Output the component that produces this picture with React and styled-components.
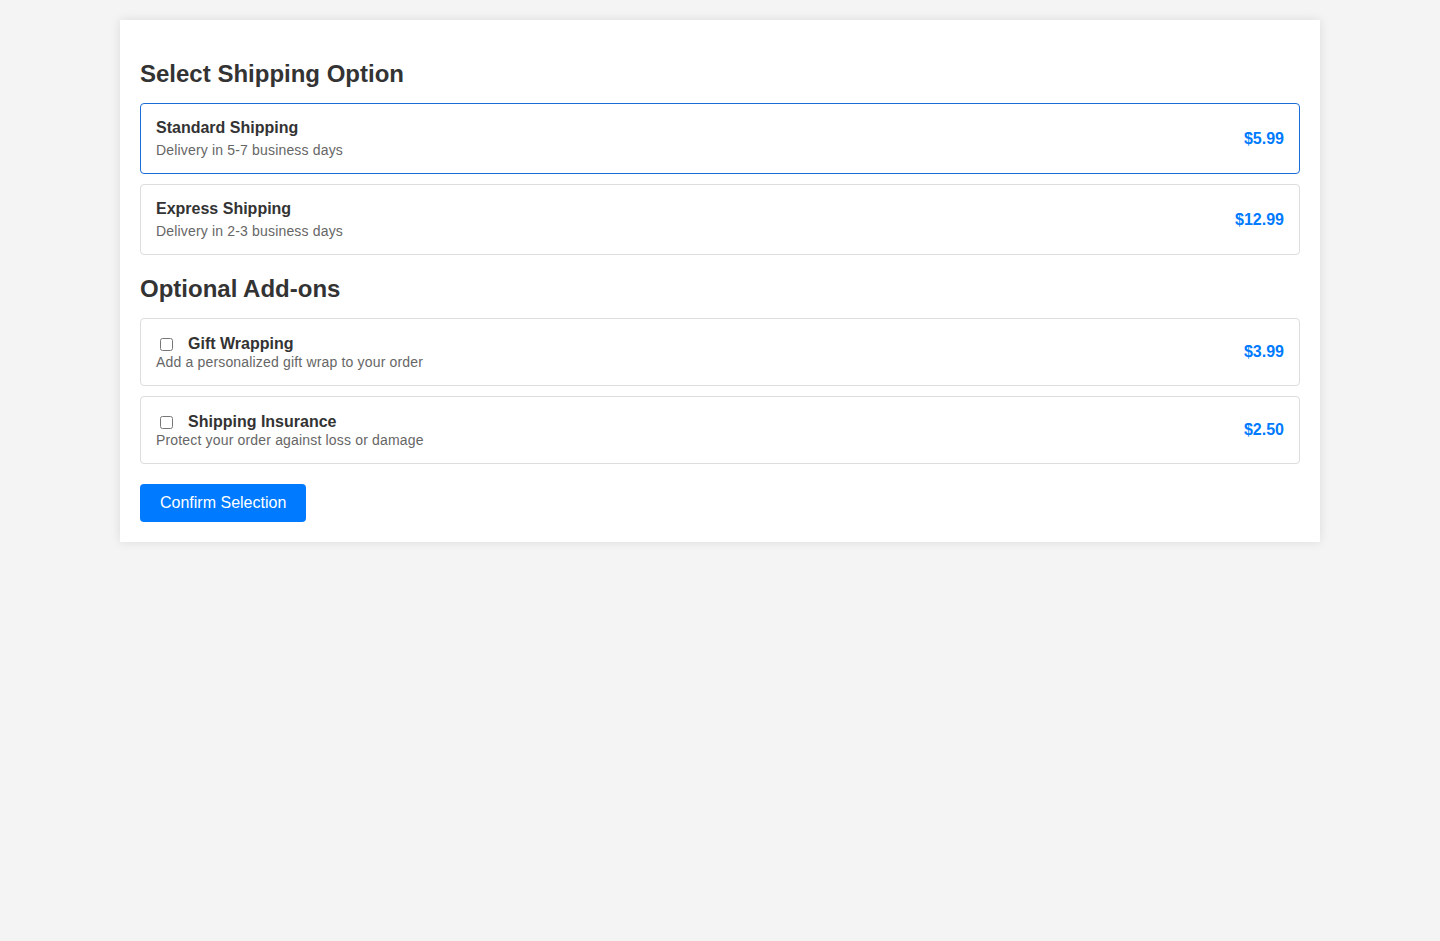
import React, { useState } from 'react';
import styled, { createGlobalStyle } from 'styled-components';

const GlobalStyle = createGlobalStyle`
  body {
    margin: 0;
    padding: 20px 0;
    background: #f4f4f4;
    font-family: "Liberation Sans", Arial, sans-serif;
    color: #333;
  }
`;

const Panel = styled.div`
  width: 1200px;
  margin: 0 auto;
  padding: 20px;
  box-sizing: border-box;
  background: #fff;
  box-shadow: 0 0 10px rgba(0, 0, 0, 0.1);
`;

const SectionTitle = styled.h2`
  font-size: 24px;
  line-height: 28px;
  margin: 20px 0 15px;
  color: #333;
`;

const OptionCard = styled.div`
  display: flex;
  align-items: center;
  justify-content: space-between;
  padding: 15px;
  margin-bottom: 10px;
  border: 1px solid ${(p) => (p.selected ? '#1a6fd6' : '#ddd')};
  border-radius: 4px;
  cursor: pointer;
`;

const OptionTitle = styled.div`
  font-size: 16px;
  line-height: 18px;
  font-weight: bold;
  color: #333;
  margin-bottom: ${(p) => (p.tight ? '0' : '5px')};
`;

const OptionDesc = styled.div`
  font-size: 14px;
  line-height: 16px;
  letter-spacing: 0.17px;
  color: #666;
`;

const Price = styled.div`
  font-size: 16px;
  font-weight: bold;
  color: #007bff;
`;

const AddonLabel = styled.label`
  display: flex;
  align-items: center;
  height: 20px;
  cursor: pointer;
`;

const Check = styled.input`
  width: 13px;
  height: 13px;
  margin: 0 15px 0 4px;
`;

const ConfirmButton = styled.button`
  margin-top: 10px;
  padding: 10px 20px;
  font-family: inherit;
  font-size: 16px;
  line-height: 18px;
  color: #fff;
  background: #007bff;
  border: none;
  border-radius: 4px;
  cursor: pointer;
`;

const shippingOptions = [
  { id: 'standard', title: 'Standard Shipping', desc: 'Delivery in 5-7 business days', price: '$5.99' },
  { id: 'express', title: 'Express Shipping', desc: 'Delivery in 2-3 business days', price: '$12.99' },
];

const addons = [
  { id: 'gift', title: 'Gift Wrapping', desc: 'Add a personalized gift wrap to your order', price: '$3.99' },
  { id: 'insurance', title: 'Shipping Insurance', desc: 'Protect your order against loss or damage', price: '$2.50' },
];

const App = () => {
  const [shipping, setShipping] = useState('standard');
  const [extras, setExtras] = useState({});

  return (
    <>
      <GlobalStyle />
      <Panel>
        <SectionTitle>Select Shipping Option</SectionTitle>
        {shippingOptions.map((opt) => (
          <OptionCard
            key={opt.id}
            selected={shipping === opt.id}
            onClick={() => setShipping(opt.id)}
          >
            <div>
              <OptionTitle>{opt.title}</OptionTitle>
              <OptionDesc>{opt.desc}</OptionDesc>
            </div>
            <Price>{opt.price}</Price>
          </OptionCard>
        ))}

        <SectionTitle>Optional Add-ons</SectionTitle>
        {addons.map((item) => (
          <OptionCard key={item.id}>
            <div>
              <AddonLabel>
                <Check
                  type="checkbox"
                  checked={!!extras[item.id]}
                  onChange={() => setExtras({ ...extras, [item.id]: !extras[item.id] })}
                />
                <OptionTitle tight>{item.title}</OptionTitle>
              </AddonLabel>
              <OptionDesc>{item.desc}</OptionDesc>
            </div>
            <Price>{item.price}</Price>
          </OptionCard>
        ))}

        <ConfirmButton>Confirm Selection</ConfirmButton>
      </Panel>
    </>
  );
};

export default App;
